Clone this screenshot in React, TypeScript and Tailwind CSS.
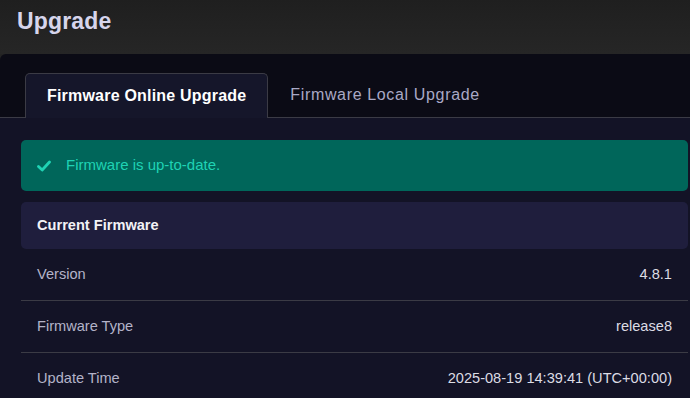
export default function App() {
  const rows = [
    { label: "Version", value: "4.8.1" },
    { label: "Firmware Type", value: "release8" },
    { label: "Update Time", value: "2025-08-19 14:39:41 (UTC+00:00)" },
  ];
  return (
    <div
      className="w-[690px] h-[398px] overflow-hidden bg-[#232323] flex flex-col"
      style={{ fontFamily: '"Liberation Sans", Arial, sans-serif' }}
    >
      <div className="h-[54px] shrink-0 bg-gradient-to-b from-[#1f1f1f] to-[#262626] pl-[17px] pt-[7px]">
        <h1 className="text-[23px] leading-[28px] font-bold text-[#d6d5ec] tracking-[0.15px]">Upgrade</h1>
      </div>
      <div className="flex-1 bg-[#0b0b15] rounded-tl-[6px] flex flex-col">
        <div className="flex items-end pt-[18px] pl-[25px] border-b border-[#3b3b45]">
          <div className="h-[45px] -mb-px px-[21px] flex items-center bg-[#15162a] border border-b-0 border-[#3b3b45] rounded-t-[5px] text-[16px] font-bold text-white tracking-[0.2px]">
            Firmware Online Upgrade
          </div>
          <div className="h-[45px] px-[22px] flex items-center text-[16px] text-[#a9a9c6] tracking-[0.65px]">
            Firmware Local Upgrade
          </div>
        </div>
        <div className="flex-1 bg-[#131326] pl-[21px] pr-[2px] pt-[22px]">
          <div className="h-[51px] rounded-[5px] bg-[#00665a] flex items-center pl-[16px] gap-[15px]">
            <svg width="14" height="12" viewBox="0 0 14 12" className="shrink-0">
              <polyline
                points="1.5,6.5 5.2,10 12.5,2"
                fill="none"
                stroke="#1fd3b4"
                strokeWidth="2.8"
                strokeLinecap="round"
                strokeLinejoin="round"
              />
            </svg>
            <span className="text-[15px] text-[#1fd3b4]">Firmware is up-to-date.</span>
          </div>
          <div className="mt-[11px] h-[47px] rounded-[5px] bg-[#1f1e3d] flex items-center pl-[16px] text-[14.6px] font-bold text-[#f2f2f6]">
            Current Firmware
          </div>
          {rows.map((r, i) => (
            <div
              key={r.label}
              className={
                "h-[52px] flex items-center justify-between px-[16px] text-[14.6px] " +
                (i < rows.length - 1 ? "border-b border-[#3b3b45]" : "")
              }
            >
              <span className="text-[#b3b3c9]">{r.label}</span>
              <span className="text-[#dcdce4]">{r.value}</span>
            </div>
          ))}
        </div>
      </div>
    </div>
  );
}
